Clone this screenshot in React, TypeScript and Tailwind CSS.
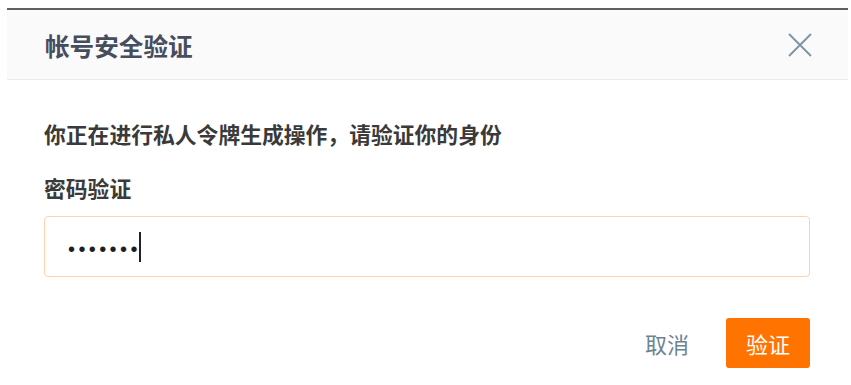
const font = { fontFamily: '"Noto Sans CJK SC", "Liberation Sans", sans-serif' };

export default function App() {
  return (
    <div className="w-full h-[385px] bg-white pt-[8px] px-[3px]" style={font}>
      <div className="ml-[4px] w-[841px] border-t-2 border-[#5f5f66]">
        {/* header */}
        <div className="h-[70px] bg-[#fafafa] border-b border-[#ebebeb] flex items-center justify-between pl-[38px] pr-[36px]">
          <h2 className="text-[24.6px] leading-[30px] font-bold text-[#464e5e]">帐号安全验证</h2>
          <button className="text-[#7f95a3] mt-[1px]">
            <svg width="24" height="24" viewBox="0 0 24 24" fill="none" stroke="currentColor" strokeWidth="2">
              <path d="M1 1 L23 23 M23 1 L1 23" />
            </svg>
          </button>
        </div>

        {/* body */}
        <div className="pl-[37px] pr-[38px]">
          <p className="mt-[39px] text-[21.8px] leading-[30px] font-bold text-[#3a3a3a]">
            你正在进行私人令牌生成操作，请验证你的身份
          </p>
          <label className="block mt-[24px] text-[21.8px] leading-[30px] font-bold text-[#3a3a3a]">密码验证</label>
          <div className="mt-[13px] h-[61px] rounded-[4px] border border-[#ffd2ad] bg-white flex items-center pl-[23px]">
            <span
              className="text-[20px] leading-[20px] tracking-[3.4px] text-[#1e1e1e] mt-[4px]"
              style={{ fontFamily: '"Liberation Sans", sans-serif' }}
            >
              •••••••
            </span>
            <span className="w-[2px] h-[30px] bg-[#222] -ml-[2px]" />
          </div>

          <div className="mt-[41px] flex items-center justify-end gap-[37px]">
            <button className="text-[22px] leading-[30px] text-[#6e8391]">取消</button>
            <button className="w-[84px] h-[50px] rounded-[3px] bg-[#ff7300] text-white text-[22px] leading-[30px]">
              验证
            </button>
          </div>
        </div>
      </div>
    </div>
  );
}
